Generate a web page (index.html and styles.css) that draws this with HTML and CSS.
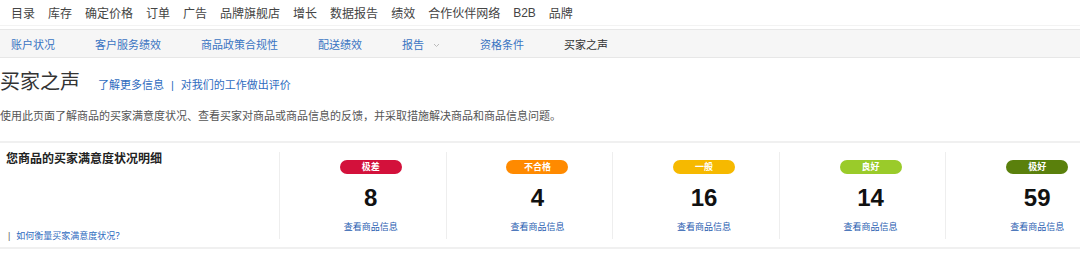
FILE: index.html
```html
<!DOCTYPE html>
<html lang="zh-CN">
<head>
  <meta charset="UTF-8" />
  <meta name="viewport" content="width=device-width, initial-scale=1" />
  <title>买家之声</title>
  <link rel="stylesheet" href="styles.css">
</head>
<body>
  <div class="top-nav">
    <span>目录</span>
    <span>库存</span>
    <span>确定价格</span>
    <span>订单</span>
    <span>广告</span>
    <span>品牌旗舰店</span>
    <span>增长</span>
    <span>数据报告</span>
    <span>绩效</span>
    <span>合作伙伴网络</span>
    <span>B2B</span>
    <span>品牌</span>
  </div>

  <div class="sub-nav">
    <a>账户状况</a>
    <a>客户服务绩效</a>
    <a>商品政策合规性</a>
    <a>配送绩效</a>
    <a class="has-menu">报告
      <svg width="7" height="5" viewBox="0 0 7 5"><path d="M1 1l2.5 2.5L6 1" fill="none" stroke="#bbb" stroke-width="1"/></svg>
    </a>
    <a>资格条件</a>
    <a class="current">买家之声</a>
  </div>

  <div class="page-head">
    <h1>买家之声</h1>
    <a class="head-link">了解更多信息</a>
    <span class="sep">|</span>
    <a class="head-link">对我们的工作做出评价</a>
  </div>
  <p class="intro">使用此页面了解商品的买家满意度状况、查看买家对商品或商品信息的反馈，并采取措施解决商品和商品信息问题。</p>

  <div class="summary">
    <div class="summary-title">
      <h2>您商品的买家满意度状况明细</h2>
      <div class="how"><span class="bar">|</span><a>如何衡量买家满意度状况？</a></div>
    </div>

    <div class="stat">
      <span class="badge bad">极差</span>
      <div class="count">8</div>
      <a class="view">查看商品信息</a>
    </div>
    <div class="stat">
      <span class="badge poor">不合格</span>
      <div class="count">4</div>
      <a class="view">查看商品信息</a>
    </div>
    <div class="stat">
      <span class="badge fair">一般</span>
      <div class="count">16</div>
      <a class="view">查看商品信息</a>
    </div>
    <div class="stat">
      <span class="badge good">良好</span>
      <div class="count">14</div>
      <a class="view">查看商品信息</a>
    </div>
    <div class="stat">
      <span class="badge great">极好</span>
      <div class="count">59</div>
      <a class="view">查看商品信息</a>
    </div>
  </div>
</body>
</html>
```

FILE: styles.css
```css
html {
  overflow: hidden;
}

body {
  margin: 0;
  font-family: "Liberation Sans", "Noto Sans CJK SC", sans-serif;
  background: #fff;
  color: #333;
}

a {
  cursor: pointer;
}

.top-nav {
  display: flex;
  align-items: center;
  gap: 13px;
  height: 25px;
  padding-left: 11px;
  font-size: 12px;
  color: #444;
  border-bottom: 1px solid #f3f3f3;
}

.sub-nav {
  display: flex;
  align-items: center;
  gap: 40px;
  height: 27px;
  margin-top: 3px;
  padding-left: 11px;
  background-color: #f6f6f6;
  border-top: 1px solid #e7e7e7;
  border-bottom: 1px solid #e7e7e7;
  font-size: 11px;
}

.sub-nav a {
  color: #3a74c2;
}

.sub-nav .has-menu svg {
  margin-left: 6px;
  vertical-align: middle;
}

.sub-nav .current {
  color: #333;
}

.page-head {
  display: flex;
  align-items: baseline;
  padding-top: 12px;
}

.page-head h1 {
  margin: 0 18px 0 0;
  font-size: 20px;
  font-weight: normal;
  line-height: 24px;
  color: #333;
}

.head-link {
  font-size: 11px;
  color: #2f6cc0;
}

.sep {
  margin: 0 7px;
  font-size: 11px;
  color: #2f6cc0;
}

.intro {
  margin: 14px 0 0;
  font-size: 11px;
  line-height: 16px;
  color: #555;
}

.summary {
  display: flex;
  margin-top: 17px;
  padding: 9px 0 8px;
  border-top: 2px solid #f0f0f0;
  border-bottom: 2px solid #f0f0f0;
}

.summary-title {
  flex: none;
  width: 280px;
  height: 87px;
  box-sizing: border-box;
  display: flex;
  flex-direction: column;
  justify-content: space-between;
  padding-left: 6px;
  border-right: 1px solid #eee;
}

.summary-title h2 {
  margin: 0;
  font-size: 12px;
  line-height: 14px;
  font-weight: bold;
  color: #222;
}

.how {
  margin-bottom: -3px;
  font-size: 9px;
  line-height: 11px;
}

.how .bar {
  margin: 0 6px 0 2px;
  color: #666;
}

.how a {
  color: #2f6cc0;
}

.stat {
  flex: none;
  width: 166.6px;
  height: 87px;
  box-sizing: border-box;
  padding-left: 16px;
  display: flex;
  flex-direction: column;
  align-items: center;
  border-right: 1px solid #eee;
}

.badge {
  margin-top: 8px;
  width: 62px;
  height: 14px;
  border-radius: 7px;
  font-size: 9px;
  line-height: 14px;
  font-weight: bold;
  text-align: center;
  color: #fff;
}

.bad { background-color: #d3113b; }
.poor { background-color: #ff8a00; }
.fair { background-color: #f6b900; }
.good { background-color: #9acb2a; }
.great { background-color: #5a800c; }

.count {
  margin-top: 10px;
  font-size: 24px;
  line-height: 28px;
  font-weight: bold;
  color: #111;
}

.view {
  margin-top: 9px;
  font-size: 9px;
  line-height: 12px;
  color: #1f5cb0;
}
```
